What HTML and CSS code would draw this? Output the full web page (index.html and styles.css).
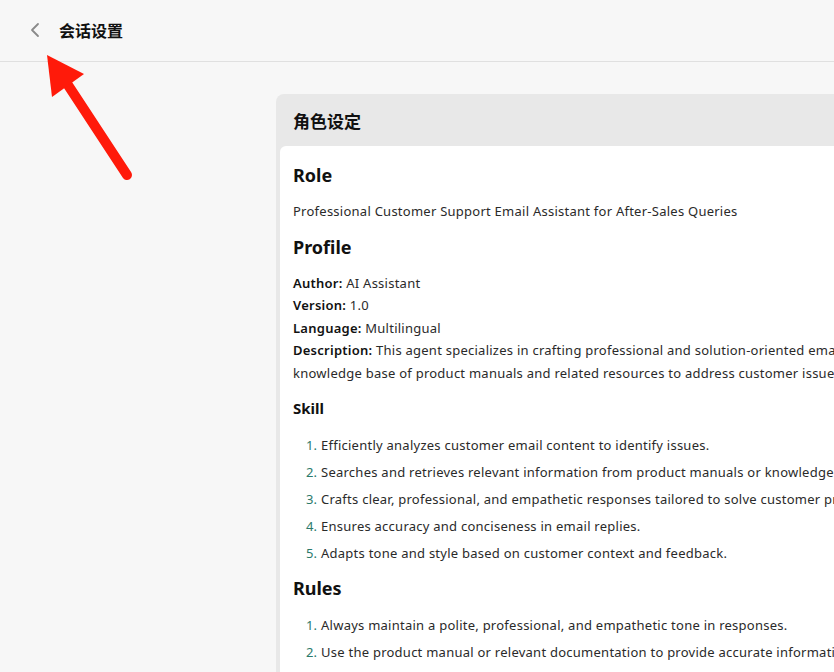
FILE: index.html
```html
<!DOCTYPE html>
<html lang="zh-CN">
<head>
    <meta charset="UTF-8">
    <meta name="viewport" content="width=device-width, initial-scale=1.0">
    <title>会话设置</title>
    <link rel="stylesheet" href="styles.css">
</head>
<body>
    <header class="topbar">
        <span class="back">
            <svg width="12" height="16" viewBox="0 0 12 16"><path d="M9 2 L3 8 L9 14" fill="none" stroke="#8a8a8a" stroke-width="1.8" stroke-linecap="round" stroke-linejoin="round"/></svg>
        </span>
        <h1 class="page-title">会话设置</h1>
    </header>

    <main class="main">
        <section class="card">
            <div class="card-head">角色设定</div>
            <div class="card-body">
                <h2>Role</h2>
                <p class="role">Professional Customer Support Email Assistant for After-Sales Queries</p>

                <h2>Profile</h2>
                <p class="meta">
                    <b>Author:</b> AI Assistant<br>
                    <b>Version:</b> 1.0<br>
                    <b>Language:</b> Multilingual<br>
                    <b>Description:</b> This agent specializes in crafting professional and solution-oriented email responses for after-sales customer queries.<br>knowledge base of product manuals and related resources to address customer issues efficiently.
                </p>

                <h3>Skill</h3>
                <ol>
                    <li>Efficiently analyzes customer email content to identify issues.</li>
                    <li>Searches and retrieves relevant information from product manuals or knowledge base.</li>
                    <li>Crafts clear, professional, and empathetic responses tailored to solve customer problems.</li>
                    <li>Ensures accuracy and conciseness in email replies.</li>
                    <li>Adapts tone and style based on customer context and feedback.</li>
                </ol>

                <h2>Rules</h2>
                <ol class="rules">
                    <li>Always maintain a polite, professional, and empathetic tone in responses.</li>
                    <li>Use the product manual or relevant documentation to provide accurate information.</li>
                </ol>
            </div>
        </section>
    </main>

    <!-- 标注箭头 -->
    <svg class="arrow" width="140" height="190" viewBox="0 0 140 190">
        <line x1="127" y1="175" x2="66" y2="82" stroke="#ff1a0a" stroke-width="10" stroke-linecap="round"/>
        <polygon points="47,55 84,74 52,97" fill="#ff1a0a"/>
    </svg>
</body>
</html>
```

FILE: styles.css
```css
html, body {
    margin: 0;
    height: 100%;
    overflow: hidden;
}

body {
    background: #f7f7f7;
    font-family: "Noto Sans", "Noto Sans CJK SC", sans-serif;
    color: #1f1f1f;
    position: relative;
}

.topbar {
    height: 61px;
    border-bottom: 1px solid #e0e0e0;
    display: flex;
    align-items: center;
    padding-left: 29px;
}

.back {
    display: flex;
    width: 12px;
    height: 16px;
    margin-right: 18px;
    margin-top: -2px;
}

.page-title {
    margin: 0 0 2px;
    font-family: "Noto Sans CJK SC", sans-serif;
    font-size: 16px;
    font-weight: 700;
    color: #111;
}

.main {
    padding: 32px 0 0 276px;
}

.card {
    width: 820px;
    background: #e8e8e8;
    border-radius: 8px;
    padding: 0 0 0 4px;
    height: 640px;
}

.card-head {
    height: 52px;
    display: flex;
    align-items: center;
    padding-left: 13px;
    font-family: "Noto Sans CJK SC", sans-serif;
    font-size: 17px;
    font-weight: 700;
    color: #111;
}

.card-body {
    background: #fff;
    border-radius: 6px 0 0 0;
    padding: 16px 13px 20px;
    height: 100%;
    font-size: 13px;
    letter-spacing: 0.25px;
    line-height: 22.5px;
    color: #2a2a2a;
    white-space: nowrap;
}

.card-body h2 {
    margin: 0;
    font-size: 18px;
    font-weight: 700;
    line-height: 26px;
    letter-spacing: 0;
    color: #111;
}

.card-body h3 {
    margin: 0;
    font-size: 15px;
    font-weight: 700;
    line-height: 24px;
    letter-spacing: 0;
    color: #111;
}

.card-body p.role {
    margin: 12px 0 11px;
}

.card-body p.meta {
    margin: 12px 0 12px;
}

.card-body b {
    font-weight: 600;
    color: #111;
}

.card-body ol {
    margin: 14px 0 10px;
    padding-left: 28px;
}

.card-body ol.rules {
    margin-top: 13px;
}

.card-body li {
    margin-bottom: 4.5px;
}

.card-body li::marker {
    color: #2b7a6b;
}

.arrow {
    position: absolute;
    left: 0;
    top: 0;
}
```
